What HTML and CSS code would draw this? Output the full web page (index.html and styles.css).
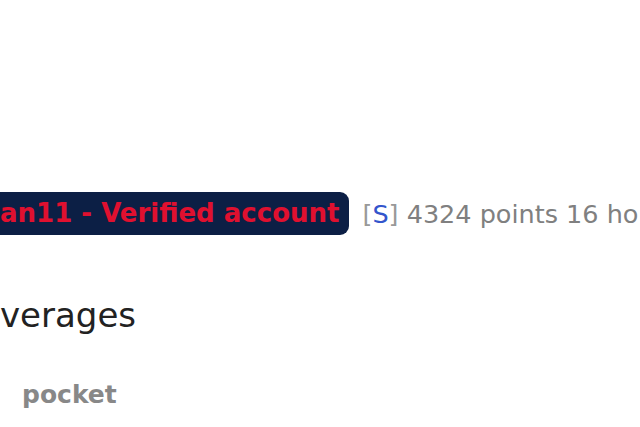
FILE: index.html
```html
<!DOCTYPE html>
<html lang="en">
<head>
  <meta charset="UTF-8" />
  <meta name="viewport" content="width=device-width, initial-scale=1.0" />
  <title>Verified account</title>
  <link rel="stylesheet" href="styles.css">
</head>
<body>
  <div class="post">
    <div class="tagline">
      <span class="author-badge">an11 - Verified account</span>
      <span class="meta"><span class="bracket">[</span><span class="submitter">S</span><span class="bracket">]</span> 4324 points 16 hours ago</span>
    </div>
    <h2 class="title">verages</h2>
    <div class="buttons">
      <span class="pocket">pocket</span>
    </div>
  </div>
</body>
</html>
```

FILE: styles.css
```css
body {
  margin: 0;
  padding: 0;
  background-color: #ffffff;
  font-family: "DejaVu Sans", Verdana, sans-serif;
  overflow: hidden;
  width: 640px;
  height: 427px;
}
.post {
  padding-top: 192px;
}
.tagline {
  display: flex;
  align-items: center;
  white-space: nowrap;
  height: 43px;
}
.author-badge {
  display: inline-block;
  background-color: #0c1f45;
  color: #e0102f;
  font-weight: bold;
  font-size: 26px;
  line-height: 43px;
  height: 43px;
  padding: 0 10px 0 0;
  border-radius: 0 9px 9px 0;
}
.meta {
  margin-left: 13px;
  font-size: 25.5px;
  color: #808080;
}
.bracket {
  color: #999999;
}
.submitter {
  color: #3355cc;
}
.title {
  margin: 60px 0 0 0;
  font-weight: normal;
  font-size: 34px;
  color: #222222;
  line-height: 40px;
}
.buttons {
  margin-top: 45px;
  padding-left: 22px;
}
.pocket {
  font-weight: bold;
  font-size: 25px;
  color: #888888;
}
```
